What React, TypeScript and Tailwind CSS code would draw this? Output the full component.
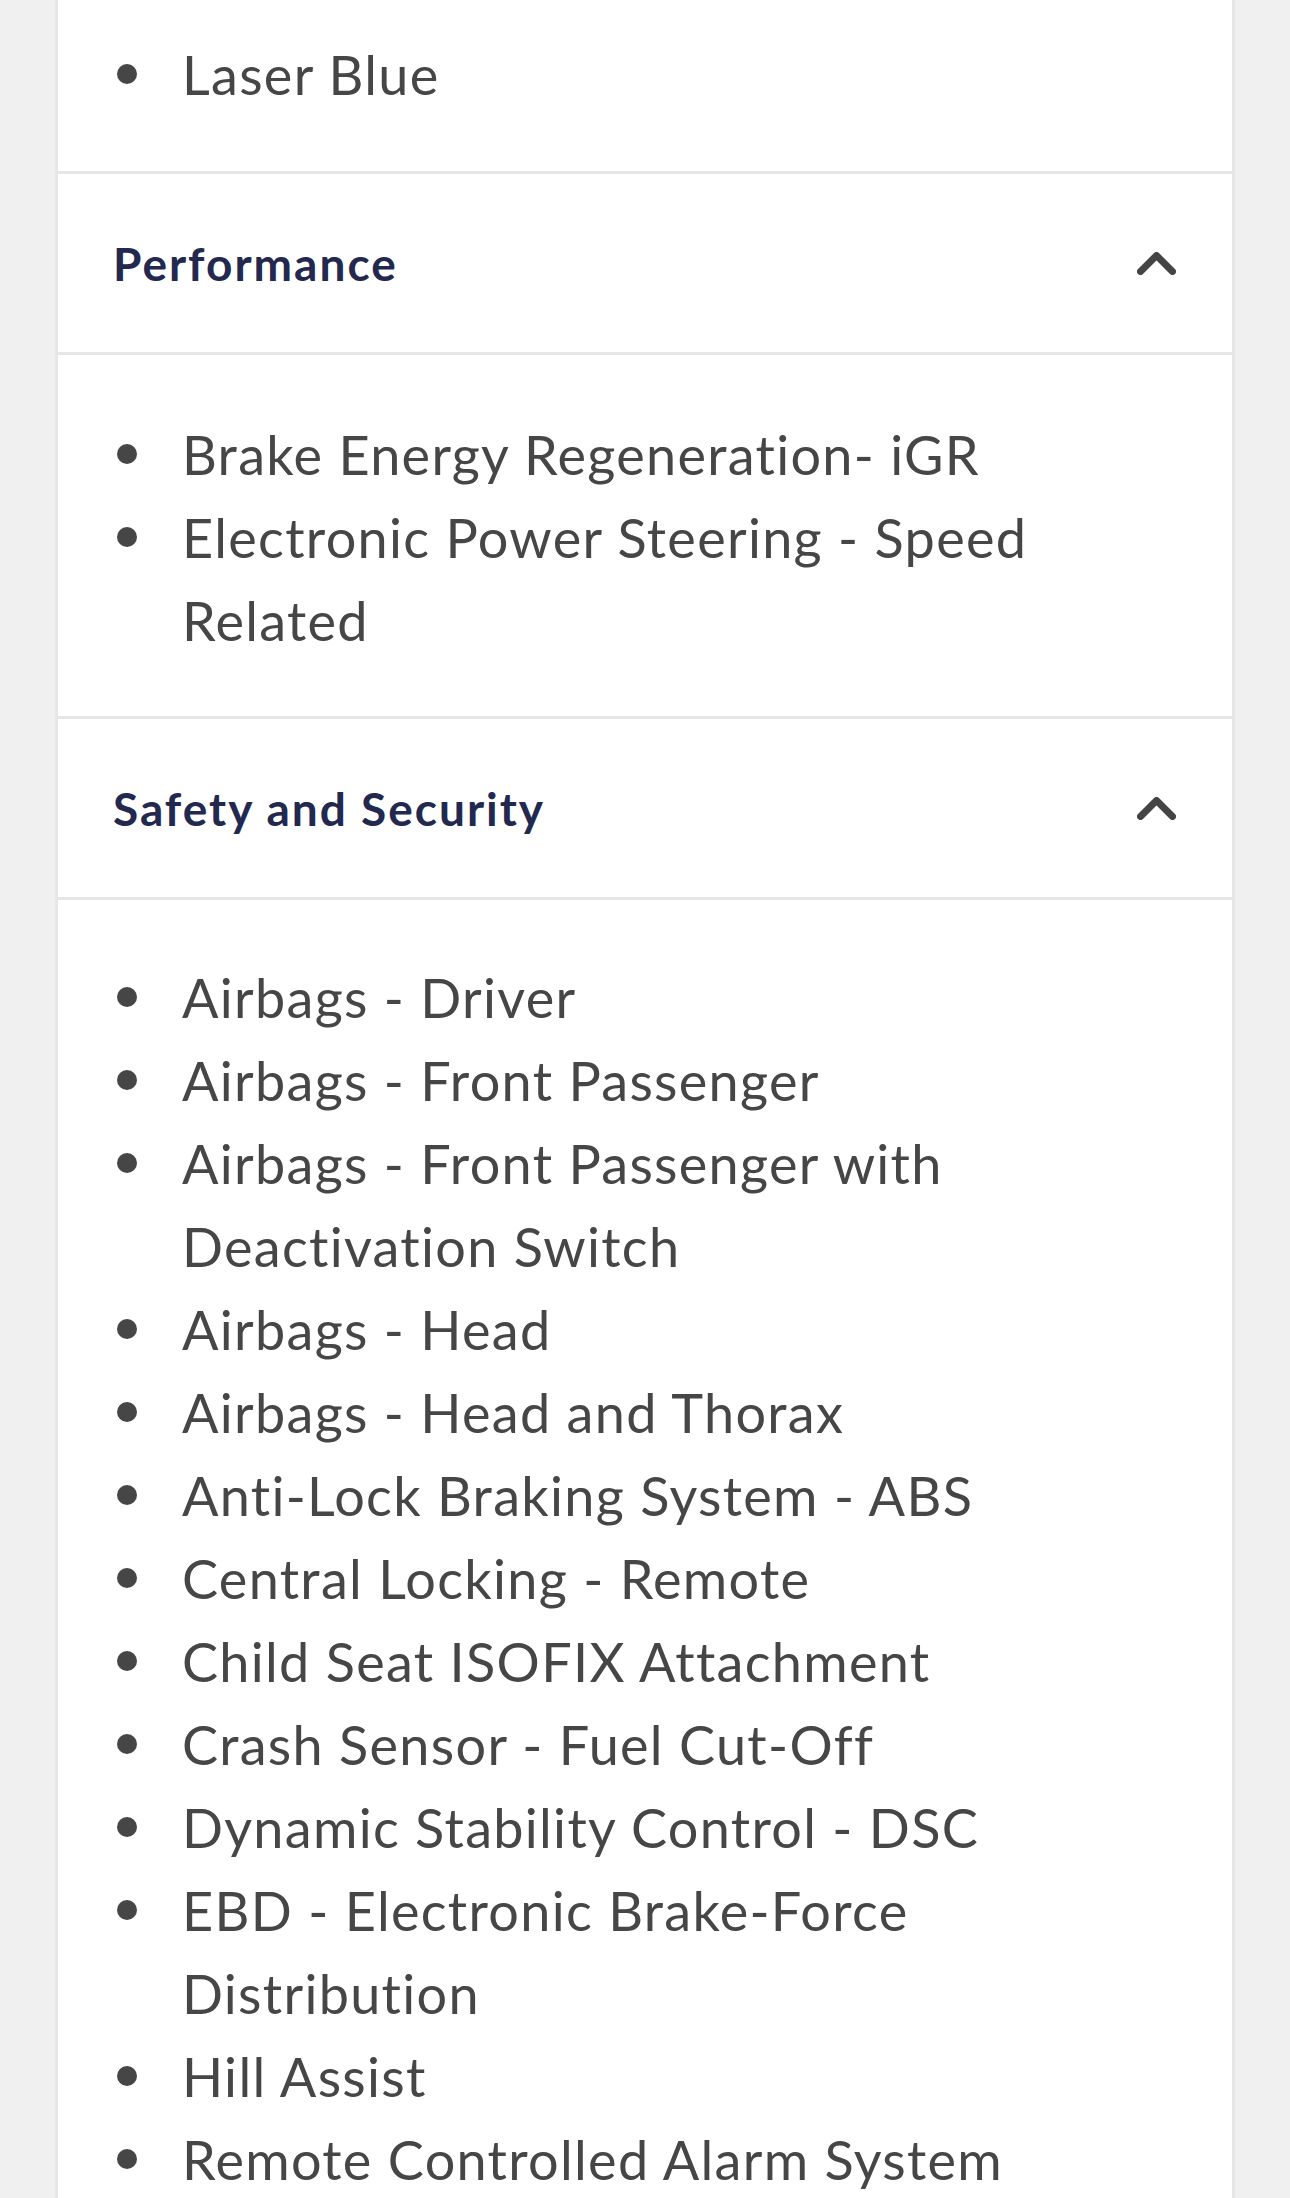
import React from "react";

const performance = [
  "Brake Energy Regeneration- iGR",
  "Electronic Power Steering - Speed Related",
];

const safety = [
  "Airbags - Driver",
  "Airbags - Front Passenger",
  "Airbags - Front Passenger with Deactivation Switch",
  "Airbags - Head",
  "Airbags - Head and Thorax",
  "Anti-Lock Braking System - ABS",
  "Central Locking - Remote",
  "Child Seat ISOFIX Attachment",
  "Crash Sensor - Fuel Cut-Off",
  "Dynamic Stability Control - DSC",
  "EBD - Electronic Brake-Force Distribution",
  "Hill Assist",
  "Remote Controlled Alarm System",
];

function Chevron() {
  return (
    <svg width="39" height="23" viewBox="0 0 39 23" fill="none" className="shrink-0">
      <path
        d="M3.5 19.5 L19.5 3.5 L35.5 19.5"
        stroke="#444444"
        strokeWidth="7"
        strokeLinecap="round"
        strokeLinejoin="round"
      />
    </svg>
  );
}

function Items({ items }: { items: string[] }) {
  return (
    <ul className="flex flex-col">
      {items.map((t) => (
        <li key={t} className="flex text-[54px] leading-[83px] tracking-[1.3px] text-[#464646]">
          <span className="w-[65px] shrink-0">
            <span className="mt-[31px] block h-[20px] w-[20px] rounded-full bg-[#464646]" />
          </span>
          <span className="min-w-0 flex-1">{t}</span>
        </li>
      ))}
    </ul>
  );
}

function Header({ title }: { title: string }) {
  return (
    <div className="flex h-[181px] items-center justify-between border-b-[3px] border-[#e6e6e6] pl-[55px] pr-[56px]">
      <span className="text-[46px] font-bold leading-[63px] tracking-[2px] text-[#23284f]">{title}</span>
      <Chevron />
    </div>
  );
}

export default function App() {
  return (
    <div
      className="min-h-[2198px] bg-[#f0f0f0] px-[55px]"
      style={{ fontFamily: "Lato, 'Noto Sans', sans-serif" }}
    >
      <div className="min-h-[2198px] border-x-[3px] border-[#e6e6e6] bg-white">
        <div className="border-b-[3px] border-[#e6e6e6] pb-[55px] pl-[59px] pr-[58px] pt-[33px]">
          <Items items={["Laser Blue"]} />
        </div>
        <Header title="Performance" />
        <div className="border-b-[3px] border-[#e6e6e6] pb-[54px] pl-[59px] pr-[58px] pt-[58px]">
          <Items items={performance} />
        </div>
        <Header title="Safety and Security" />
        <div className="pb-[55px] pl-[59px] pr-[58px] pt-[56px]">
          <Items items={safety} />
        </div>
      </div>
    </div>
  );
}
